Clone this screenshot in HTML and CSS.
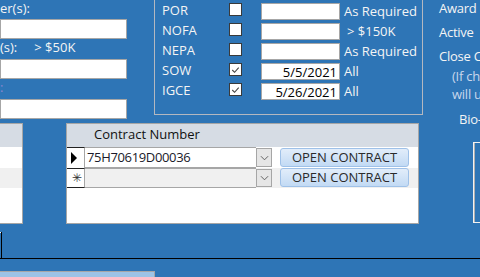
FILE: index.html
```html
<!DOCTYPE html>
<html>
<head>
<meta charset="utf-8">
<link rel="stylesheet" href="styles.css">
</head>
<body>
<div class="top">
  <div class="colA">
    <div class="lbl first">er(s):</div>
    <div class="tbox"></div>
    <div class="lbl"><span>(s):</span><span class="hint">&gt; $50K</span></div>
    <div class="tbox"></div>
    <div class="lbl purple">:</div>
    <div class="tbox"></div>
  </div>
  <div class="fs">
    <div class="frow"><span class="fl">POR</span><span class="cb"></span><span class="fin"></span><span class="fr">As Required</span></div>
    <div class="frow"><span class="fl">NOFA</span><span class="cb"></span><span class="fin"></span><span class="fr gt">&gt; $150K</span></div>
    <div class="frow"><span class="fl">NEPA</span><span class="cb"></span><span class="fin"></span><span class="fr">As Required</span></div>
    <div class="frow"><span class="fl">SOW</span><span class="cb"><svg viewBox="0 0 12 12" width="12" height="12"><polyline points="2.5,6 5,8.5 9.5,3.5" fill="none" stroke="#444" stroke-width="1.2"/></svg></span><span class="fin">5/5/2021</span><span class="fr">All</span></div>
    <div class="frow"><span class="fl">IGCE</span><span class="cb"><svg viewBox="0 0 12 12" width="12" height="12"><polyline points="2.5,6 5,8.5 9.5,3.5" fill="none" stroke="#444" stroke-width="1.2"/></svg></span><span class="fin">5/26/2021</span><span class="fr">All</span></div>
  </div>
  <div class="colC">
    <div class="cl award">Award</div>
    <div class="cl active">Active</div>
    <div class="cl close">Close C</div>
    <div class="cl note n1">(If ch</div>
    <div class="cl note n2">will u</div>
    <div class="cl bio">Bio-</div>
  </div>
</div>
<div class="mid">
  <div class="subL">
    <div class="shead"></div>
    <div class="srow white"></div>
    <div class="srow grey"></div>
  </div>
  <div class="subM">
    <div class="mhead">Contract Number</div>
    <div class="mrow r1">
      <div class="sel"><svg viewBox="0 0 8 12" width="8" height="12"><polygon points="1,0 7,6 1,12" fill="#000"/></svg></div>
      <div class="cell">75H70619D00036</div>
      <div class="dd"><svg viewBox="0 0 10 6" width="9" height="6"><polyline points="1,1 5,5 9,1" fill="none" stroke="#555" stroke-width="1"/></svg></div>
      <div class="btn">OPEN CONTRACT</div>
    </div>
    <div class="mrow r2">
      <div class="sel ast">&#10035;</div>
      <div class="cell"></div>
      <div class="dd"><svg viewBox="0 0 10 6" width="9" height="6"><polyline points="1,1 5,5 9,1" fill="none" stroke="#555" stroke-width="1"/></svg></div>
      <div class="btn">OPEN CONTRACT</div>
    </div>
  </div>
  <div class="panelR"></div>
</div>
<div class="tabrow"><div class="tabedge"></div></div>
<div class="bottom"><div class="bbox"></div></div>
</body>
</html>
```
FILE: styles.css
```css
html, body {
  margin: 0;
  padding: 0;
}
body {
  width: 480px;
  height: 277px;
  overflow: hidden;
  background: #2e75b6;
  font-family: "Open Sans", "Noto Sans", sans-serif;
  font-size: 13px;
  color: #f4f4f4;
}
.top {
  display: flex;
  height: 123px;
}
.colA {
  width: 154px;
  flex: none;
}
.lbl {
  height: 20px;
  line-height: 16px;
  display: flex;
  white-space: nowrap;
}
.lbl.first {
  height: 19px;
}
.lbl .hint {
  margin-left: 17px;
}
.lbl.purple {
  color: #8a86cf;
}
.tbox {
  width: 125px;
  height: 18px;
  background: #fff;
  border: 1px solid #a6a6a6;
}
.fs {
  flex: none;
  border: 1px solid #b4b8c0;
  border-top: none;
  padding-top: 3px;
  box-sizing: border-box;
  width: 269px;
  height: 115px;
}
.frow {
  height: 20px;
  display: flex;
  align-items: flex-start;
  white-space: nowrap;
}
.fl {
  width: 67px;
  padding-left: 7px;
  line-height: 14px;
}
.cb {
  width: 11px;
  height: 11px;
  background: #fff;
  border: 1px solid #3a3a3a;
  margin-right: 19px;
  display: flex;
}
.fin {
  width: 75px;
  height: 15px;
  background: #fff;
  border: 1px solid #a6a6a6;
  color: #000;
  text-align: right;
  line-height: 16px;
  padding-right: 2px;
}
.fr {
  margin-left: 4px;
  line-height: 20px;
  margin-top: -2px;
}
.fr.gt {
  padding-left: 3px;
}
.colC {
  flex: 1;
  padding-left: 16px;
  white-space: nowrap;
  letter-spacing: -0.25px;
}
.cl {
  line-height: 16px;
}
.active { margin-top: 8px; }
.close { margin-top: 8px; }
.note { color: #c9d7ec; padding-left: 13px; }
.n1 { margin-top: 4px; }
.n2 { margin-top: 2px; }
.bio { padding-left: 20px; margin-top: 9px; }
.mid {
  display: flex;
  height: 101px;
  align-items: flex-start;
}
.subL {
  width: 22px;
  height: 99px;
  background: #fff;
  border: 1px solid #a6a6a6;
  border-left: none;
  flex: none;
}
.shead {
  height: 23px;
  background: #d6dce4;
}
.srow.white { background: #fff; height: 21px; }
.srow.grey { background: #f0f0f0; height: 20px; }
.subM {
  margin-left: 43px;
  width: 351px;
  height: 99px;
  background: #fff;
  border: 1px solid #a6a6a6;
  flex: none;
}
.mhead {
  height: 23px;
  background: #d6dce4;
  color: #111;
  padding-left: 27px;
  line-height: 20px;
}
.mrow {
  height: 21px;
  display: flex;
  align-items: stretch;
  box-sizing: border-box;
}
.mrow.r2 {
  background: #f0f0f0;
  height: 20px;
}
.sel {
  width: 18px;
  flex: none;
  background: #fff;
  border-top: 1px solid #222;
  border-right: 1px solid #a6a6a6;
  display: flex;
  align-items: center;
  padding-left: 3px;
  box-sizing: border-box;
}
.r2 .sel {
  border-bottom: 1px solid #222;
}
.r1 .sel {
  border-bottom: 1px solid #222;
  margin-bottom: -1px;
}
.sel.ast {
  font-size: 12px;
  color: #333;
  padding-left: 5px;
  line-height: 1;
}
.cell {
  width: 171px;
  flex: none;
  border-top: 1px solid #a6a6a6;
  border-bottom: 1px solid #a6a6a6;
  color: #1a1a2a;
  line-height: 18px;
  padding-left: 2px;
  letter-spacing: -0.35px;
  box-sizing: border-box;
}
.r1 .cell { background: #fff; }
.dd {
  width: 16px;
  flex: none;
  margin: 1px 0;
  background: #e6e6e6;
  border: 1px solid #a6a6a6;
  display: flex;
  align-items: center;
  justify-content: center;
  box-sizing: border-box;
}
.btn {
  margin: 1px 0 0 8px;
  width: 129px;
  height: 19px;
  box-sizing: border-box;
  border: 1px solid #9fc1e8;
  border-radius: 3px;
  background: linear-gradient(#e2edfa, #c2daf4);
  color: #2a2a2a;
  text-align: center;
  line-height: 17px;
}
.r2 .btn {
  margin-top: 0;
}
.panelR {
  margin-left: 54px;
  margin-top: 19px;
  flex: 1;
  height: 79px;
  border: 1px solid #f2f2f2;
  border-right: none;
  box-shadow: inset 1px 0 0 #b0b0b0;
}
.tabrow {
  margin-top: 8px;
  height: 26px;
  border-bottom: 1px solid #000;
}
.tabedge {
  width: 1px;
  height: 26px;
  border-right: 1px solid #000;
  box-shadow: inset 0 1px 0 #fff;
}
.bottom {
  padding-top: 12px;
}
.bbox {
  width: 154px;
  height: 10px;
  background: #9dc3e6;
  border-top: 1px solid #a6a6a6;
  border-right: 1px solid #a6a6a6;
}
```
